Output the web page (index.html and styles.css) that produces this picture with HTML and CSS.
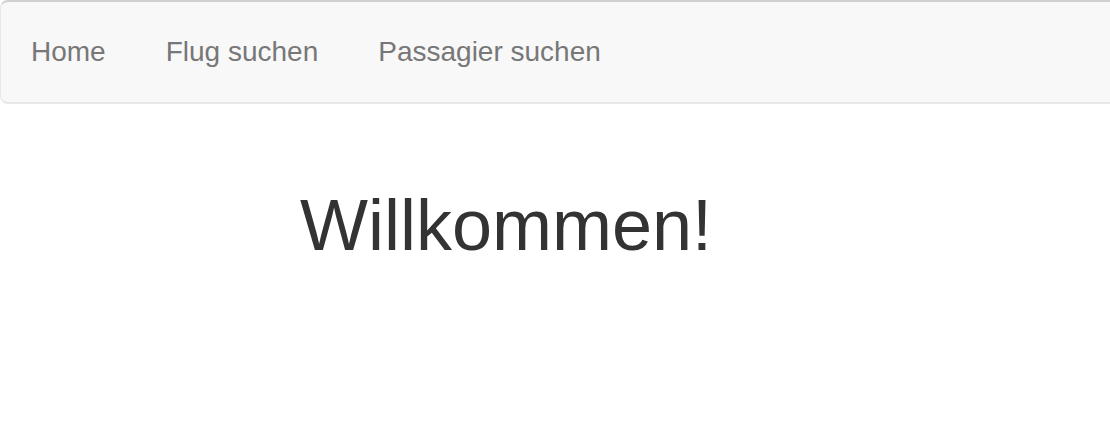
FILE: index.html
```html
<!DOCTYPE html>
<html lang="de">
<head>
<meta charset="utf-8">
<title>Willkommen</title>
<link rel="stylesheet" href="styles.css">
</head>
<body>
<nav class="navbar">
  <ul class="nav">
    <li><a href="#">Home</a></li>
    <li><a href="#">Flug suchen</a></li>
    <li><a href="#">Passagier suchen</a></li>
  </ul>
</nav>
<main class="content">
  <h1 class="title">Willkommen!</h1>
</main>
</body>
</html>
```
FILE: styles.css
```css
html, body {
  margin: 0;
  padding: 0;
  background: #fff;
}
body {
  font-family: "Liberation Sans", Arial, sans-serif;
  color: #333;
}
.navbar {
  background: #f8f8f8;
  border: 2px solid #e7e7e7;
  border-top-color: #d0d0d0;
  border-left-width: 1px;
  border-radius: 8px 0 0 8px;
  border-right: none;
  margin: 0;
}
.nav {
  list-style: none;
  margin: 0;
  padding: 0;
  display: flex;
}
.nav a {
  display: block;
  padding: 30px;
  font-size: 28px;
  line-height: 40px;
  color: #777;
  text-decoration: none;
}
.content {
  padding: 82px 0 0 300px;
}
.title {
  margin: 0;
  font-size: 72px;
  font-weight: 500;
  line-height: 1.1;
  color: #333;
}
```
